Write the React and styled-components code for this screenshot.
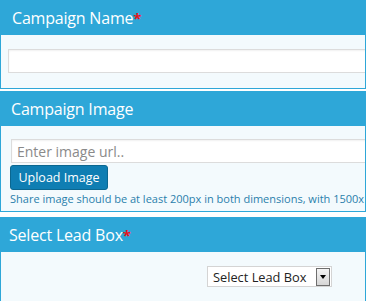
import React from 'react';
import styled, { createGlobalStyle } from 'styled-components';

const Global = createGlobalStyle`
  body {
    margin: 0;
    background: #fff;
    font-family: "Open Sans", "Noto Sans", sans-serif;
  }
`;

const Page = styled.div`
  width: 366px;
`;

const Panel = styled.div`
  border: 1px solid #2ea7d8;
  background: #f3fafd;
  overflow: hidden;
  margin-bottom: ${(p) => p.gap || 2}px;
`;

const Header = styled.div`
  background: #2ea7d8;
  color: #fff;
  height: 34px;
  line-height: 34px;
  font-size: 16px;
  letter-spacing: -0.2px;
  padding-left: ${(p) => p.indent || 11}px;
  white-space: nowrap;
  span {
    color: #e8141c;
    font-size: 15px;
    font-weight: 700;
  }
`;

const Body = styled.div`
  padding: ${(p) => p.pad || '13px 0 16px 7px'};
`;

const TextInput = styled.input`
  display: block;
  box-sizing: border-box;
  width: 420px;
  height: 24px;
  margin: 0;
  border: 1px solid #dcdcdc;
  box-shadow: inset 0 1px 2px rgba(0, 0, 0, 0.06);
  background: #fff;
  padding: 0 5px;
  font-family: "Open Sans", sans-serif;
  font-size: 14px;
  color: #555;
  &::placeholder {
    color: #8a8a8a;
  }
`;

const UploadButton = styled.button`
  display: block;
  margin: 2px 0 0 -1px;
  width: 98px;
  height: 25px;
  border: 1px solid #0b6790;
  border-radius: 3px;
  background: #0f7eb3;
  color: #fff;
  font-family: "Open Sans", sans-serif;
  font-size: 12.5px;
  padding: 0;
`;

const Help = styled.div`
  margin-top: 1px;
  font-size: 11px;
  line-height: 15px;
  color: #2a7fac;
  white-space: nowrap;
  margin-left: -1px;
`;

const Select = styled.div`
  box-sizing: border-box;
  width: 125px;
  height: 21px;
  border: 1px solid #d4d4d4;
  background: #fff;
  display: flex;
  align-items: center;
  justify-content: space-between;
  padding: 0 1px 0 5px;
  font-size: 12.8px;
  color: #222;
`;

const Arrow = styled.div`
  box-sizing: border-box;
  width: 14px;
  height: 18px;
  border: 1px solid #6e6e6e;
  background: linear-gradient(#f4f4f4, #d6d6d6);
  display: flex;
  align-items: center;
  justify-content: center;
  &::after {
    content: '';
    border-left: 3px solid transparent;
    border-right: 3px solid transparent;
    border-top: 4px solid #000;
  }
`;

export default function App() {
  return (
    <Page>
      <Global />
      <Panel gap={2}>
        <Header>
          Campaign Name<span>*</span>
        </Header>
        <Body pad="14px 0 15px 7px">
          <TextInput />
        </Body>
      </Panel>
      <Panel gap={5}>
        <Header indent={10}>Campaign Image</Header>
        <Body pad="13px 0 5px 10px">
          <TextInput placeholder="Enter image url.." />
          <UploadButton>Upload Image</UploadButton>
          <Help>
            Share image should be at least 200px in both dimensions, with 1500x1500px recommended.
          </Help>
        </Body>
      </Panel>
      <Panel>
        <Header indent={8}>
          Select Lead Box<span>*</span>
        </Header>
        <Body pad="14px 0 20px 206px">
          <Select>
            Select Lead Box
            <Arrow />
          </Select>
        </Body>
      </Panel>
    </Page>
  );
}
